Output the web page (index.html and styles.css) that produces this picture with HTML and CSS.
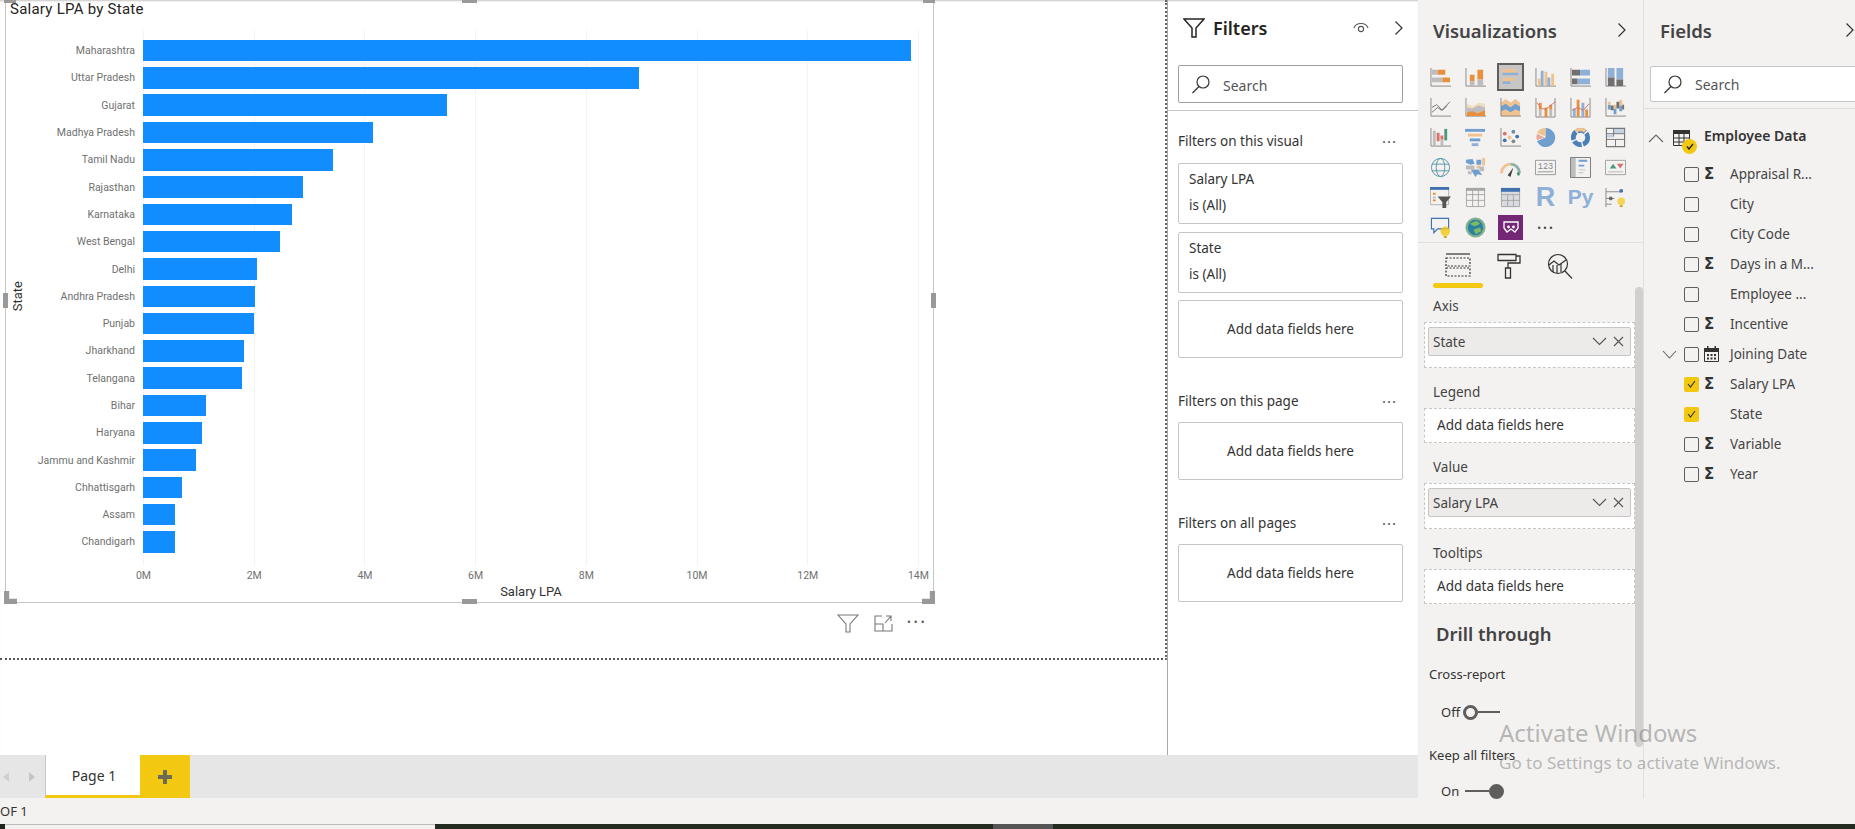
FILE: index.html
```html
<!DOCTYPE html>
<html lang="en">
<head>
    <meta charset="UTF-8">
    <title>Power BI report</title>
    <link rel="stylesheet" href="styles.css">
</head>
<body>
<div class="app">
    <div class="report">
        <div class="work">
            <div class="canvas">
                <div class="page">
                    <div class="visual">
                        <span class="h h-tl"></span><span class="h h-tm"></span><span class="h h-tr"></span>
                        <span class="h h-ml"></span><span class="h h-mr"></span>
                        <span class="h h-bl"></span><span class="h h-bm"></span><span class="h h-br"></span>

                        <div class="chart-title">Salary LPA by State</div>
                        <div class="y-title">State</div>
                        <div class="plot">
                            <div class="gridlines">
                                <i></i><i></i><i></i><i></i><i></i><i></i><i></i><i></i>
                            </div>
                            <div class="row"><span class="lab">Maharashtra</span><span class="bar" style="width:768px"></span></div>
                            <div class="row"><span class="lab">Uttar Pradesh</span><span class="bar" style="width:496px"></span></div>
                            <div class="row"><span class="lab">Gujarat</span><span class="bar" style="width:304px"></span></div>
                            <div class="row"><span class="lab">Madhya Pradesh</span><span class="bar" style="width:230px"></span></div>
                            <div class="row"><span class="lab">Tamil Nadu</span><span class="bar" style="width:190px"></span></div>
                            <div class="row"><span class="lab">Rajasthan</span><span class="bar" style="width:160px"></span></div>
                            <div class="row"><span class="lab">Karnataka</span><span class="bar" style="width:149px"></span></div>
                            <div class="row"><span class="lab">West Bengal</span><span class="bar" style="width:137px"></span></div>
                            <div class="row"><span class="lab">Delhi</span><span class="bar" style="width:114px"></span></div>
                            <div class="row"><span class="lab">Andhra Pradesh</span><span class="bar" style="width:112px"></span></div>
                            <div class="row"><span class="lab">Punjab</span><span class="bar" style="width:111px"></span></div>
                            <div class="row"><span class="lab">Jharkhand</span><span class="bar" style="width:101px"></span></div>
                            <div class="row"><span class="lab">Telangana</span><span class="bar" style="width:99px"></span></div>
                            <div class="row"><span class="lab">Bihar</span><span class="bar" style="width:63px"></span></div>
                            <div class="row"><span class="lab">Haryana</span><span class="bar" style="width:59px"></span></div>
                            <div class="row"><span class="lab">Jammu and Kashmir</span><span class="bar" style="width:53px"></span></div>
                            <div class="row"><span class="lab">Chhattisgarh</span><span class="bar" style="width:39px"></span></div>
                            <div class="row"><span class="lab">Assam</span><span class="bar" style="width:32px"></span></div>
                            <div class="row"><span class="lab">Chandigarh</span><span class="bar" style="width:32px"></span></div>
                        </div>
                        <div class="ticks">
                            <span>0M</span><span>2M</span><span>4M</span><span>6M</span><span>8M</span><span>10M</span><span>12M</span><span>14M</span>
                        </div>
                        <div class="x-title">Salary LPA</div>
                    </div>
                    <div class="visual-tools">
                        <svg width="22" height="20" viewBox="0 0 22 20"><path d="M1 2h20l-8 9v8h-4v-8z" fill="none" stroke="#777" stroke-width="1.1"/></svg>
                        <svg width="20" height="18" viewBox="0 0 20 18"><path d="M9 2H2v15h17v-7M2 10h8v7M12 9l6-7M13 2h5v5" fill="none" stroke="#777" stroke-width="1.1"/></svg>
                        <span class="dots">···</span>
                    </div>
                </div>
            </div>

            <aside class="filters">
                <div class="filters-head">
                    <svg width="22" height="20" viewBox="0 0 22 20"><path d="M1 1h20l-8 9v9H9v-9z" fill="none" stroke="#252423" stroke-width="1.5"/></svg>
                    <span class="filters-title">Filters</span>
                    <svg class="eye" width="16" height="12" viewBox="0 0 16 12"><path d="M1 6c2-6 12-6 14 0" fill="none" stroke="#555" stroke-width="1.1"/><circle cx="8" cy="7" r="2.6" fill="none" stroke="#555" stroke-width="1.1"/></svg>
                    <svg class="chev" width="10" height="16" viewBox="0 0 10 16"><path d="M1.500 1.500 8 8l-6.500 6.500" fill="none" stroke="#333" stroke-width="1.200"/></svg>
                </div>
                <div class="search">
                    <svg width="20" height="20" viewBox="0 0 20 20"><circle cx="12" cy="8" r="6" fill="none" stroke="#333" stroke-width="1.200"/><path d="M8 12.500 1.500 19" stroke="#333" stroke-width="1.200"/></svg>
                    <span>Search</span>
                </div>
                <div class="filters-body">
                    <div class="sec-head first"><span>Filters on this visual</span><span class="sec-dots">···</span></div>
                    <div class="fcard"><span>Salary LPA</span><span>is (All)</span></div>
                    <div class="fcard"><span>State</span><span>is (All)</span></div>
                    <div class="fadd">Add data fields here</div>
                    <div class="sec-head"><span>Filters on this page</span><span class="sec-dots">···</span></div>
                    <div class="fadd">Add data fields here</div>
                    <div class="sec-head"><span>Filters on all pages</span><span class="sec-dots">···</span></div>
                    <div class="fadd">Add data fields here</div>
                </div>
            </aside>
        </div>

        <div class="tabs">
            <span class="tab-nav">
                <svg width="6" height="10" viewBox="0 0 6 10"><path d="M6 0v10L0 5z" fill="#d2d0ce"/></svg>
                <svg width="6" height="10" viewBox="0 0 6 10"><path d="M0 0v10l6-5z" fill="#c8c6c4"/></svg>
            </span>
            <span class="tab">Page 1</span>
            <span class="tab-add"><svg width="16" height="16" viewBox="0 0 16 16"><path d="M6 1h4v5h5v4h-5v5H6v-5H1V6h5z" fill="#6b6a55"/></svg></span>
        </div>
    </div>

    <aside class="viz">
        <div class="pane-head">
            <span>Visualizations</span>
            <svg width="10" height="16" viewBox="0 0 10 16"><path d="M1.500 1.500 8 8l-6.500 6.500" fill="none" stroke="#333" stroke-width="1.200"/></svg>
        </div>
        <div class="viz-grid">
            <!-- row 1 -->
            <svg viewBox="0 0 22 22"><path class="ax" d="M1 1v19h21"/><path class="g" d="M2 3h6v5H2zM2 11h11v5H2z"/><path class="o" d="M8 3h8v5H8zM13 11h8v5h-8z"/></svg>
            <svg viewBox="0 0 22 22"><path class="ax" d="M1 1v19h21"/><path class="o" d="M5 8h5v7H5zM13 3h6v10h-6z"/><path class="g" d="M5 15h5v5H5zM13 13h6v7h-6z"/></svg>
            <span class="viz-on"><svg viewBox="0 0 22 22"><path class="y" d="M2 2h15v4H2zM2 12h13v4H2z"/><path class="b" d="M2 6h18v3H2zM2 16h9v3H2z"/></svg></span>
            <svg viewBox="0 0 22 22"><path class="ax" d="M1 1v19h21"/><path class="y" d="M3 12h3v8H3zM10 5h3v15h-3zM17 7h3v13h-3z"/><path class="b" d="M6 4h3v16H6zM13 11h3v9h-3z"/></svg>
            <svg viewBox="0 0 22 22"><path class="ax" d="M1 1v19h21"/><path class="d" d="M2 3h9v6H2zM2 12h6v6H2z"/><path class="b" d="M11 3h10v6H11zM8 12h13v6H8z"/></svg>
            <svg viewBox="0 0 22 22"><path class="ax" d="M1 1v19h21"/><path class="b" d="M3 1h7v10H3zM12 1h7v12h-7z"/><path class="d" d="M3 11h7v9H3zM12 13h7v7h-7z"/></svg>
            <!-- row 2 -->
            <svg viewBox="0 0 22 22"><path class="ax" d="M1 1v19h21"/><path class="ln" d="M2 16l6-5 4 3 9-9"/><path class="ln" d="M2 11l5-3 6 6 5-5"/></svg>
            <svg viewBox="0 0 22 22"><path class="ax" d="M1 1v19h21"/><path class="tan" d="M2 7l6 3 6-4 7 1v6H2z"/><path class="g" d="M2 11l6 1 6-3 7 2v4l-9 2-10-1z"/><path class="o" d="M2 16l6-1 5 2 8-3v6H2z"/></svg>
            <svg viewBox="0 0 22 22"><path class="y" d="M1 6l5-4 5 4 5-4 5 4v6H1z"/><path class="b2" d="M1 10l5-3 5 4 5-4 5 3v6l-5-3-5 4-5-4-5 3z"/><path class="y" d="M1 15l5-2 5 3 5-3 5 2v5H1z"/><path class="ax" d="M1 1v19h21"/></svg>
            <svg viewBox="0 0 22 22"><path class="ax" d="M1 1v20h20V1"/><path class="g" d="M4 13h3v8H4zM15 13h3v8h-3z"/><path class="o" d="M4 6h3v7H4zM10 11h3v10h-3zM15 8h3v5h-3z"/><path class="ln2" d="M2 6l5 6 4 1 4-3 6-5"/></svg>
            <svg viewBox="0 0 22 22"><path class="ax" d="M1 1v20h20V1"/><path class="b" d="M3 12h3v9H3zM12 6h3v15h-3z"/><path class="o" d="M7 3h3v18H7zM16 13h3v8h-3z"/><path class="ln2" d="M2 14l6-3 6 3 6-7"/></svg>
            <svg viewBox="0 0 22 22"><path class="ax" d="M1 1v19h21"/><path class="b2" d="M3 8h3v5H3zM9 12h3v6H9zM15 9h3v6h-3z"/><path class="y" d="M3 5h3v3H3zM9 8h3v4H9zM15 3h3v6h-3z"/><path class="d" d="M6 9h3v5H6zM12 5h3v7h-3zM18 8h2v5h-2z"/></svg>
            <!-- row 3 -->
            <svg viewBox="0 0 22 22"><path class="ax" d="M1 1v19h21"/><path class="g" d="M3 4h3v16H3zM11 13h3v7h-3z"/><path class="r" d="M7 6h3v9H7zM11 9h3v4h-3z"/><path class="t" d="M15 2h3v12h-3z"/></svg>
            <svg viewBox="0 0 22 22"><path class="b2" d="M0 2h21v3H0z"/><path class="y" d="M3 7h15v3H3z"/><path class="b2" d="M5 12h11v3H5z"/><path class="b" d="M7 17h7v3H7z"/></svg>
            <svg viewBox="0 0 22 22"><path class="ax" d="M1 1v19h21"/><circle cx="5" cy="7" r="2" fill="#d9706a"/><circle cx="14" cy="5" r="2" fill="#6a8fa8"/><circle cx="5" cy="14" r="2" fill="#3f72ae"/><circle cx="10" cy="11" r="2" fill="#f0c28f"/><circle cx="18" cy="10" r="2" fill="#3f72ae"/><circle cx="14" cy="15" r="2" fill="#888"/></svg>
            <svg viewBox="0 0 22 22"><path d="M11 11V1a10 10 0 1 1-9 14z" fill="#6f9fcf"/><path d="M11 10V1a10 10 0 0 0-9 5z" fill="#f0c28f"/><path d="M10 11 2 7a10 10 0 0 0 0 7z" fill="#eba99d"/></svg>
            <svg viewBox="0 0 22 22"><circle cx="11" cy="11" r="7.500" fill="none" stroke="#4a7fb8" stroke-width="5" stroke-dasharray="9 1.500"/><path d="M6 4.500A8 8 0 0 1 16 4.500" fill="none" stroke="#f0c28f" stroke-width="4"/></svg>
            <svg viewBox="0 0 22 22"><path d="M1.500 1.500h19v19h-19z" fill="none" stroke="#777" stroke-width="1.200"/><path class="g2" d="M9 2h11v5H9zM2 8h7v3H2z"/><path d="M9 2v8M2 7h18M2 13h19M11 13v8" fill="none" stroke="#777" stroke-width="1"/></svg>
            <!-- row 4 -->
            <svg viewBox="0 0 22 22"><circle cx="11" cy="11" r="9.500" fill="none" stroke="#5c97a8" stroke-width="1"/><ellipse cx="11" cy="11" rx="4.500" ry="9.500" fill="none" stroke="#5c97a8" stroke-width="1"/><path d="M2 7.500h18M2 14.500h18" stroke="#5c97a8" stroke-width="1"/></svg>
            <svg viewBox="0 0 22 22"><path class="b2" d="M1 3l7-1 2 5-4 1-5-2zM6 13h8l4 6-5-1-2 3zM12 3h5v5h-5z"/><path class="y" d="M18 1h3v8h-3zM12 9h4v3h-4z"/><path class="g" d="M1 9h9v4H1zM3 15h4v3H3zM15 10h5v5h-5z"/></svg>
            <svg viewBox="0 0 22 22"><path d="M1.500 17A9.500 9.500 0 0 1 11 7.500" fill="none" stroke="#f0c28f" stroke-width="3"/><path d="M11 7.500A9.500 9.500 0 0 1 20.500 17" fill="none" stroke="#8fb0a8" stroke-width="3"/><path d="M18 18a9 6 0 0 1 2.500-.500" stroke="#3a8a6a" stroke-width="3" fill="none"/><path d="M8 19l6-8-3 10z" fill="#444"/></svg>
            <svg viewBox="0 0 22 22"><path d="M.5 3.500h21v15H.5z" fill="none" stroke="#999" stroke-width="1"/><path d="M3 15.500h16" stroke="#999"/><text x="11" y="13" class="card-num">123</text></svg>
            <svg viewBox="0 0 22 22"><path d="M.5.5h21v21H.5z" fill="none" stroke="#777" stroke-width="1"/><path class="g" d="M1 1h5v20H1z"/><path class="b2" d="M9 3h9v2H9zM9 8h6v2H9z"/><path class="g" d="M9 13h7v1H9zM9 16h5v1H9z"/></svg>
            <svg viewBox="0 0 22 22"><path d="M.5 3.500h21v15H.5z" fill="none" stroke="#a0a0a0" stroke-width="1"/><path d="M5 12l3.500-5 3.500 5z" fill="#4a9a7a"/><path d="M12.500 7h7L16 12z" fill="#d9706a"/><path d="M3 15.500h16" stroke="#bbb"/></svg>
            <!-- row 5 -->
            <svg viewBox="0 0 22 22"><path d="M.5.500h19v18H.5z" fill="none" stroke="#b0b0b0"/><path d="M0 0h20v3H0z" fill="#3f72ae"/><path class="o" d="M3 6h3v2H3zM3 13h3v2H3z"/><path d="M8 10h14l-5 6v6h-4v-6z" fill="#555"/><path class="g" d="M3 10h3v2H3z"/></svg>
            <svg viewBox="0 0 22 22"><path class="tb" d="M1.500 1.500h19v19h-19zM1.500 8h19M1.500 14h19M8 1.500v19M14 1.500v19"/><path d="M1 1h20v3H1z" fill="#a6a6a6"/></svg>
            <svg viewBox="0 0 22 22"><path d="M1 1h20v20H1z" fill="#d8dce0"/><path class="tb" d="M1.500 1.500h19v19h-19zM1.500 8h19M1.500 14h19M8 8v13M14 8v13"/><path d="M1 1h20v4H1z" fill="#3f72ae"/></svg>
            <span class="viz-text r">R</span>
            <span class="viz-text py">Py</span>
            <svg viewBox="0 0 22 22"><path class="ax" d="M1 1v20M1 5h16M1 12h9M1 18h6"/><circle cx="6" cy="12" r="2" fill="#666"/><circle cx="17" cy="4" r="2" fill="#3f72ae"/><circle cx="17" cy="15" r="4" fill="#f2c811" opacity=".7"/><path d="M15.500 19h3v2h-3z" fill="#c8a820"/></svg>
            <!-- row 6 -->
            <svg viewBox="0 0 22 22"><path d="M1.500 1.500h18v11H8l-4 4v-4H1.500z" fill="none" stroke="#3f72ae" stroke-width="1.200"/><circle cx="16" cy="15" r="5" fill="#f2c811" opacity=".8"/><path d="M14.500 20h3v2h-3z" fill="#c8a820"/></svg>
            <svg viewBox="0 0 22 22"><circle cx="11" cy="11" r="10.500" fill="#7fb08f"/><circle cx="11" cy="11" r="8" fill="#2a7fa5"/><path d="M5 7l7-3 4 3-6 3zM9 13l7-2 1 4-6 3z" fill="#7fba5f"/></svg>
            <span class="viz-apps"><svg width="16" height="12" viewBox="0 0 16 12"><path d="M1 1h14v6l-3 4-4-3-4 3-3-4z" fill="none" stroke="#fff" stroke-width="1.300"/><circle cx="5.500" cy="6" r="1.400" fill="#fff"/><circle cx="10.500" cy="6" r="1.400" fill="#fff"/></svg></span>
            <span class="viz-more">···</span>
        </div>
        <div class="viz-tabs">
            <span class="vtab vtab-on"><svg width="26" height="25" viewBox="0 0 26 25"><path d="M1 1h24" stroke="#333" stroke-width="1.200"/><path d="M1 5h24v8H1zM1 15h24v8H1z" fill="none" stroke="#333" stroke-width="1.200" stroke-dasharray="2 1.500"/></svg></span>
            <span class="vtab"><svg width="24" height="26" viewBox="0 0 24 26"><path d="M1 1.500h18v6H1z" fill="none" stroke="#333" stroke-width="1.300" stroke-linejoin="round"/><path d="M19 3h4v7H11v5" fill="none" stroke="#333" stroke-width="1.300"/><path d="M8.500 15h5v10h-5z" fill="none" stroke="#333" stroke-width="1.300"/></svg></span>
            <span class="vtab"><svg width="26" height="26" viewBox="0 0 26 26"><circle cx="11" cy="11" r="9.500" fill="none" stroke="#333" stroke-width="1.200"/><path d="M18 18l7 7.500" stroke="#333" stroke-width="1.200"/><path d="M2 12l5-4 5 4 7-5M6 12v7M10 12v8M14 11v8" fill="none" stroke="#333" stroke-width="1.200"/></svg></span>
        </div>
        <div class="viz-wells">
            <div class="well-label first">Axis</div>
            <div class="well well-full">
                <div class="pill"><span>State</span><svg width="15" height="9" viewBox="0 0 15 9"><path d="M1 1l6.500 6.500L14 1" fill="none" stroke="#555" stroke-width="1.100"/></svg><svg width="11" height="11" viewBox="0 0 11 11"><path d="M1 1l9 9M10 1l-9 9" stroke="#555" stroke-width="1.100"/></svg></div>
            </div>
            <div class="well-label">Legend</div>
            <div class="well well-add">Add data fields here</div>
            <div class="well-label">Value</div>
            <div class="well well-full">
                <div class="pill"><span>Salary LPA</span><svg width="15" height="9" viewBox="0 0 15 9"><path d="M1 1l6.500 6.500L14 1" fill="none" stroke="#555" stroke-width="1.100"/></svg><svg width="11" height="11" viewBox="0 0 11 11"><path d="M1 1l9 9M10 1l-9 9" stroke="#555" stroke-width="1.100"/></svg></div>
            </div>
            <div class="well-label">Tooltips</div>
            <div class="well well-add">Add data fields here</div>
            <div class="drill-title">Drill through</div>
            <div class="drill-label">Cross-report</div>
            <div class="toggle"><span class="tog-text">Off</span><span class="knob"></span><span class="tog-line"></span></div>
            <div class="drill-label second">Keep all filters</div>
            <div class="toggle"><span class="tog-text">On</span><span class="tog-line short"></span><span class="knob filled"></span></div>
        </div>
        <span class="viz-scroll"></span>
    </aside>

    <aside class="fields">
        <div class="pane-head">
            <span>Fields</span>
            <svg width="10" height="16" viewBox="0 0 10 16"><path d="M1.500 1.500 8 8l-6.500 6.500" fill="none" stroke="#333" stroke-width="1.200"/></svg>
        </div>
        <div class="search fields-search">
            <svg width="20" height="20" viewBox="0 0 20 20"><circle cx="12" cy="8" r="6" fill="none" stroke="#333" stroke-width="1.200"/><path d="M8 12.500 1.500 19" stroke="#333" stroke-width="1.200"/></svg>
            <span>Search</span>
        </div>
        <div class="tree">
            <div class="table-row">
                <svg class="caret" width="16" height="9" viewBox="0 0 16 9"><path d="M1 8l7-7 7 7" fill="none" stroke="#666" stroke-width="1.100"/></svg>
                <span class="table-ico">
                    <svg width="17" height="16" viewBox="0 0 17 16"><path d="M.5 .5h16v15H.5z" fill="none" stroke="#333"/><path d="M0 0h17v4H0z" fill="#333"/><path d="M.5 8h16M.5 12h16M6 4v12M11 4v12" stroke="#333"/></svg>
                    <span class="table-check"><svg width="8" height="7" viewBox="0 0 8 7"><path d="M1 3.500 3 6l4-5" fill="none" stroke="#252423" stroke-width="1.400"/></svg></span>
                </span>
                <span class="table-name">Employee Data</span>
            </div>
            <div class="field"><span class="cb"></span><span class="sig">Σ</span><span>Appraisal R...</span></div>
            <div class="field"><span class="cb"></span><span class="sig"></span><span>City</span></div>
            <div class="field"><span class="cb"></span><span class="sig"></span><span>City Code</span></div>
            <div class="field"><span class="cb"></span><span class="sig">Σ</span><span>Days in a M...</span></div>
            <div class="field"><span class="cb"></span><span class="sig"></span><span>Employee ...</span></div>
            <div class="field"><span class="cb"></span><span class="sig">Σ</span><span>Incentive</span></div>
            <div class="field">
                <svg class="expand" width="15" height="9" viewBox="0 0 15 9"><path d="M1 1l6.500 7L14 1" fill="none" stroke="#666" stroke-width="1.100"/></svg>
                <span class="cb"></span>
                <span class="sig"><svg width="15" height="16" viewBox="0 0 15 16"><path d="M.5 2.500h14v13H.5z" fill="none" stroke="#333"/><path d="M0 2h15v4H0zM3 0h1.500v3H3zM10.500 0H12v3h-1.500z" fill="#333"/><path d="M3 8h2v2H3zM6.500 8h2v2h-2zM10 8h2v2h-2zM3 11.500h2v2H3zM6.500 11.500h2v2h-2zM10 11.500h2v2h-2z" fill="#333"/></svg></span>
                <span>Joining Date</span>
            </div>
            <div class="field"><span class="cb on"><svg width="9" height="8" viewBox="0 0 9 8"><path d="M1 4l2.500 3L8 1" fill="none" stroke="#333" stroke-width="1.100"/></svg></span><span class="sig">Σ</span><span>Salary LPA</span></div>
            <div class="field"><span class="cb on"><svg width="9" height="8" viewBox="0 0 9 8"><path d="M1 4l2.500 3L8 1" fill="none" stroke="#333" stroke-width="1.100"/></svg></span><span class="sig"></span><span>State</span></div>
            <div class="field"><span class="cb"></span><span class="sig">Σ</span><span>Variable</span></div>
            <div class="field"><span class="cb"></span><span class="sig">Σ</span><span>Year</span></div>
        </div>
    </aside>

    <div class="watermark">
        <div class="wm-big">Activate Windows</div>
        <div class="wm-small">Go to Settings to activate Windows.</div>
    </div>
</div>
<div class="status">OF 1</div>
<div class="taskbar"><span class="tb-app"></span><span class="tb-dark"></span><span class="tb-btn"></span><span class="tb-dark grow"></span></div>
</body>
</html>
```

FILE: styles.css
```css
* {
    box-sizing: border-box;
}

html, body {
    margin: 0;
    padding: 0;
    height: 829px;
    overflow: hidden;
}

body {
    font-family: "Noto Sans", "Open Sans", sans-serif;
    font-size: 13px;
    color: #333;
    background-color: #f3f2f1;
    display: flex;
    flex-direction: column;
}

svg {
    display: block;
    flex: none;
}

.app {
    position: relative;
    display: flex;
    height: 798px;
}

/* report side */
.report {
    width: 1418px;
    display: flex;
    flex-direction: column;
}

.work {
    display: flex;
    height: 755px;
    background-color: #fff;
    box-shadow: inset 0 2px 2px -1px #c8c6c4;
}

.canvas {
    width: 1168px;
    border-right: 1px solid #a8a8a8;
}

.page {
    height: 660px;
    padding-left: 5px;
    border-bottom: 2px dotted #555;
    border-right: 2px dotted #666;
}

/* the chart */
.visual {
    position: relative;
    width: 929px;
    height: 603px;
    border: 1px solid #c8c6c4;
    border-top: none;
}

.h {
    position: absolute;
    background-color: #999;
}
.h-tl { left: -2px; top: 0; width: 12px; height: 3px; }
.h-tm { left: 456px; top: 0; width: 15px; height: 3px; }
.h-tr { right: -2px; top: 0; width: 12px; height: 3px; }
.h-ml { left: -3px; top: 293px; width: 5px; height: 15px; }
.h-mr { right: -3px; top: 293px; width: 5px; height: 15px; }
.h-bl { left: -2px; bottom: -2px; width: 13px; height: 13px; clip-path: polygon(0 0, 40% 0, 40% 60%, 100% 60%, 100% 100%, 0 100%); }
.h-bm { left: 456px; bottom: -2px; width: 15px; height: 5px; }
.h-br { right: -2px; bottom: -2px; width: 13px; height: 13px; clip-path: polygon(60% 0, 100% 0, 100% 100%, 0 100%, 0 60%, 60% 60%); }

.chart-title {
    font-family: Roboto, sans-serif;
    font-size: 15px;
    letter-spacing: 0.25px;
    line-height: 18px;
    padding-left: 4px;
    color: #252423;
}

.y-title {
    position: absolute;
    left: 5px;
    top: 281px;
    font-family: Roboto, sans-serif;
    font-size: 13px;
    line-height: 13px;
    color: #333;
    writing-mode: vertical-rl;
    transform: rotate(180deg);
}

.plot {
    position: relative;
    margin-top: 19px;
    height: 528px;
}

.gridlines {
    position: absolute;
    left: 137px;
    width: 776px;
    top: -7px;
    bottom: 0;
    display: flex;
    justify-content: space-between;
}

.gridlines i {
    width: 1px;
    border-left: 1px dotted #e8e8e8;
}

.row {
    position: relative;
    display: flex;
    align-items: center;
    height: 27.3px;
}

.lab {
    width: 129px;
    margin-right: 8px;
    text-align: right;
    font-family: Roboto, sans-serif;
    font-size: 10.500px;
    color: #707070;
    white-space: nowrap;
}

.bar {
    height: 21.500px;
    background-color: #118dff;
}

.ticks {
    display: flex;
    justify-content: space-between;
    width: 776px;
    margin-left: 137px;
    margin-top: 1px;
    height: 17px;
    font-family: Roboto, sans-serif;
    font-size: 10.500px;
    line-height: 19px;
    color: #707070;
}

.ticks span {
    width: 1px;
    display: flex;
    justify-content: center;
}

.x-title {
    width: 776px;
    margin-left: 137px;
    text-align: center;
    font-family: Roboto, sans-serif;
    font-size: 13px;
    line-height: 18px;
    color: #333;
}

.visual-tools {
    width: 929px;
    display: flex;
    justify-content: flex-end;
    align-items: center;
    gap: 14px;
    padding-right: 7px;
    margin-top: 8px;
}

.dots {
    font-size: 18px;
    line-height: 20px;
    color: #555;
    letter-spacing: 2px;
    margin-bottom: 4px;
}

/* filters pane */
.filters {
    width: 250px;
    padding-top: 16px;
}

.filters-head {
    display: flex;
    align-items: center;
    height: 24px;
    padding-left: 15px;
}

.filters-title {
    font-size: 18px;
    font-weight: 600;
    color: #252423;
    margin-left: 8px;
    flex: 1;
}

.eye {
    margin-right: 25px;
}

.chev {
    margin-right: 14px;
}

.search {
    display: flex;
    align-items: center;
    gap: 12px;
    width: 225px;
    height: 38px;
    margin: 25px 0 0 10px;
    padding-left: 12px;
    background-color: #fff;
    border: 1px solid #a19f9d;
    border-radius: 2px;
    font-size: 14px;
    color: #555;
}

.filters .search span {
    margin-top: 2px;
}

.filters-body {
    margin-top: 7px;
    padding: 0 15px 0 10px;
    border-top: 1px solid #c8c6c4;
}

.sec-head {
    display: flex;
    justify-content: space-between;
    align-items: center;
    height: 20px;
    margin: 33px 0 11px;
    font-size: 13.500px;
    color: #333;
}

.sec-head.first {
    margin-top: 20px;
    margin-bottom: 12px;
}

.sec-dots {
    font-size: 15px;
    letter-spacing: 1px;
    margin-right: 6px;
    color: #555;
}

.fcard {
    display: flex;
    flex-direction: column;
    justify-content: center;
    gap: 7px;
    height: 61px;
    margin-bottom: 7.500px;
    padding: 0 0 2px 10px;
    border: 1px solid #c8c6c4;
    border-radius: 2px;
    font-size: 13.500px;
    line-height: 19px;
}

.fadd {
    display: flex;
    justify-content: center;
    align-items: center;
    height: 58px;
    border: 1px solid #c8c6c4;
    border-radius: 2px;
    font-size: 13.500px;
}

/* page tabs */
.tabs {
    display: flex;
    height: 43px;
    background-color: #e6e6e6;
}

.tab-nav {
    width: 45px;
    display: flex;
    justify-content: space-between;
    align-items: center;
    padding: 0 10px 0 3px;
}

.tab {
    width: 95px;
    text-align: center;
    line-height: 42px;
    padding-left: 2px;
    font-size: 14px;
    color: #333;
    background-color: #fff;
    border-left: 1px solid #c8c6c4;
    border-bottom: 3px solid #f2c811;
}

.tab-add {
    width: 50px;
    display: flex;
    justify-content: center;
    align-items: center;
    background-color: #f2c811;
}

/* visualizations pane */
.viz {
    position: relative;
    width: 226px;
    border-right: 1px solid #e1dfdd;
}

.pane-head {
    display: flex;
    justify-content: space-between;
    align-items: center;
    height: 24px;
    margin-top: 18px;
    padding: 0 16px 0 15px;
    font-size: 18.500px;
    font-weight: 600;
    color: #444;
}

.viz-grid {
    display: grid;
    grid-template-columns: repeat(6, 35px);
    grid-auto-rows: 30px;
    justify-items: center;
    align-items: center;
    margin-top: 20px;
    padding-left: 5px;
    height: 180px;
}

.viz-grid > svg {
    width: 21px;
    height: 21px;
}

.viz-grid .ax { fill: none; stroke: #8a8886; stroke-width: 1; }
.viz-grid .g { fill: #bdbdbd; }
.viz-grid .g2 { fill: #c3d3e6; }
.viz-grid .o { fill: #e8903c; }
.viz-grid .y { fill: #f0c28f; }
.viz-grid .tan { fill: #f0dcc0; }
.viz-grid .b { fill: #8fb0d6; }
.viz-grid .b2 { fill: #6f9fcf; }
.viz-grid .d { fill: #707070; }
.viz-grid .r { fill: #d9706a; }
.viz-grid .t { fill: #4a9a7a; }
.viz-grid .ln { fill: none; stroke: #777; stroke-width: 1; }
.viz-grid .ln2 { fill: none; stroke: #d9706a; stroke-width: 1; }
.viz-grid .tb { fill: none; stroke: #a6a6a6; stroke-width: 1; }

.card-num {
    font-family: "Liberation Mono", monospace;
    font-size: 9px;
    fill: #888;
    text-anchor: middle;
}

.viz-on {
    width: 27px;
    height: 28px;
    padding: 2px;
    background-color: #c8c6c4;
    border: 2px solid #605e5c;
}

.viz-on svg {
    width: 19px;
    height: 20px;
}

.viz-text {
    font-family: "Liberation Sans", sans-serif;
    font-weight: 700;
    color: #8fb0d6;
}

.viz-text.r {
    font-size: 27px;
}

.viz-text.py {
    font-size: 21px;
}

.viz-apps {
    width: 25px;
    height: 25px;
    display: flex;
    justify-content: center;
    align-items: center;
    background-color: #742774;
}

.viz-more {
    font-size: 18px;
    letter-spacing: 1px;
    color: #444;
}

.viz-tabs {
    display: flex;
    height: 46px;
    padding: 10px 0 0 27px;
    gap: 26px;
    border-top: 1px solid #e1dfdd;
}

.vtab {
    position: relative;
    display: block;
}

.vtab-on::after {
    content: "";
    position: absolute;
    left: -12px;
    width: 50px;
    top: 30px;
    height: 5px;
    border-radius: 3px;
    background-color: #f2c811;
}

.viz-wells {
    padding: 0 8px 0 6px;
    font-size: 13.500px;
}

.well-label {
    height: 19px;
    line-height: 19px;
    margin: 15px 0 6px 9px;
    color: #444;
}

.well-label.first {
    margin-top: 9px;
}

.well {
    border: 1px dashed #c8c6c4;
    background-color: #fff;
}

.well-full {
    padding: 4px 3px;
    height: 46px;
}

.well-add {
    height: 35px;
    line-height: 33px;
    padding-left: 12px;
}

.pill {
    display: flex;
    align-items: center;
    gap: 6px;
    height: 29px;
    padding: 0 6px 0 4px;
    background-color: #edebe9;
    border: 1px solid #c8c6c4;
    border-radius: 2px;
    color: #444;
}

.pill span {
    flex: 1;
}

.drill-title {
    margin: 18px 0 0 12px;
    font-size: 18.500px;
    font-weight: 600;
    line-height: 24px;
    color: #444;
}

.drill-label {
    margin: 19px 0 0 5px;
    line-height: 19px;
    font-size: 13px;
    color: #333;
}

.drill-label.second {
    margin: 26px 0 -2px 5px;
}

.toggle {
    display: flex;
    align-items: center;
    height: 16px;
    margin: 20px 0 0 17px;
    gap: 3px;
}

.tog-text {
    font-size: 13px;
}

.knob {
    width: 15px;
    height: 15px;
    border-radius: 50%;
    border: 3px solid #605e5c;
}

.knob.filled {
    background-color: #605e5c;
    margin-left: -3px;
}

.tog-line {
    width: 22px;
    height: 2px;
    margin-left: -3px;
    background-color: #605e5c;
}

.tog-line.short {
    margin-left: 3px;
    width: 24px;
}

.viz-scroll {
    position: absolute;
    right: 0;
    top: 287px;
    width: 8px;
    height: 460px;
    border-radius: 4px;
    background-color: #d2d0ce;
}

/* fields pane */
.fields {
    width: 211px;
    overflow: hidden;
}

.fields .pane-head {
    padding: 0 0 0 16px;
}

.fields-search {
    width: 230px;
    height: 36px;
    margin: 24px 0 0 6px;
    border-color: #c8c6c4;
}

.tree {
    margin-top: 6px;
    border-top: 1px solid #e1dfdd;
    padding-top: 15px;
}

.table-row {
    display: flex;
    align-items: center;
    height: 28px;
    padding-left: 4px;
    margin-bottom: 7px;
}

.table-ico {
    position: relative;
    margin-left: 9px;
    margin-right: 14px;
}

.table-check {
    position: absolute;
    left: 9px;
    top: 9px;
    width: 15px;
    height: 15px;
    display: flex;
    justify-content: center;
    align-items: center;
    border-radius: 50%;
    background-color: #f2c811;
}

.table-name {
    font-size: 14px;
    font-weight: 600;
    color: #333;
    margin-bottom: 5px;
}

.field {
    position: relative;
    display: flex;
    align-items: center;
    height: 30px;
    padding-left: 40px;
    font-size: 13.500px;
    color: #444;
}

.expand {
    position: absolute;
    left: 18px;
    top: 11px;
}

.cb {
    display: flex;
    justify-content: center;
    align-items: center;
    width: 15px;
    height: 15px;
    border: 1px solid #605e5c;
    border-radius: 2px;
}

.cb.on {
    border: none;
    background-color: #f2c811;
}

.sig {
    width: 31px;
    padding-left: 5px;
    font-family: "DejaVu Sans", sans-serif;
    font-size: 15px;
    font-weight: 700;
    color: #333;
}

/* overlay + bottom bars */
.watermark {
    position: absolute;
    left: 1499px;
    top: 719px;
    color: rgba(120, 120, 120, 0.5);
    pointer-events: none;
}

.wm-big {
    font-size: 24px;
    line-height: 28px;
}

.wm-small {
    font-size: 17px;
    line-height: 22px;
    margin-top: 5px;
}

.status {
    height: 26px;
    line-height: 26px;
    font-size: 13px;
    color: #333;
    white-space: nowrap;
    background-color: #f3f2f1;
}

.taskbar {
    display: flex;
    height: 5px;
    background-color: #1f241d;
}

.tb-app {
    width: 430px;
    margin-left: 5px;
    background-color: #f3f2f1;
    border-top: 1px solid #bbb;
}

.tb-dark {
    width: 558px;
    background-color: #232a20;
}

.tb-dark.grow {
    flex: 1;
}

.tb-btn {
    width: 60px;
    background-color: #555;
}
```
